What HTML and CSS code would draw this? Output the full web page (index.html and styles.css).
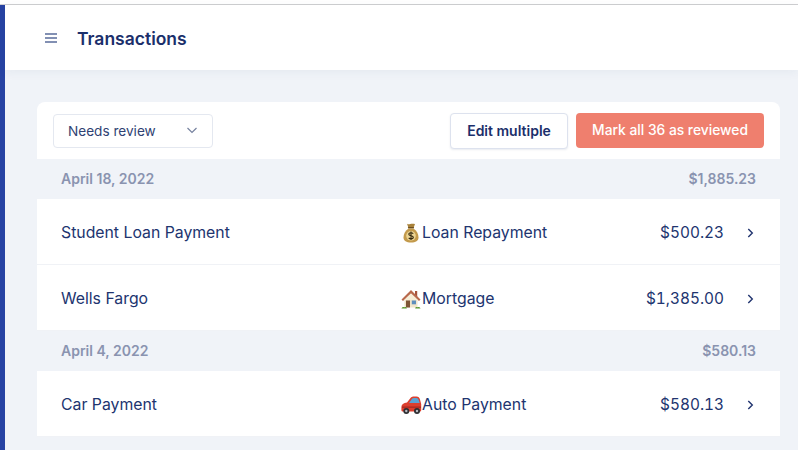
FILE: index.html
```html
<!DOCTYPE html>
<html lang="en">
<head>
<meta charset="utf-8">
<title>Transactions</title>
<link rel="stylesheet" href="styles.css">
</head>
<body>
<div class="topline"></div>
<div class="app">
  <div class="rail"></div>
  <div class="main">
    <header class="header">
      <svg class="menu" width="12" height="10" viewBox="0 0 12 10"><path d="M0 1h12M0 5h12M0 9h12" stroke="#5a6c9b" stroke-width="1.5" fill="none"/></svg>
      <h1 class="title">Transactions</h1>
    </header>
    <section class="content">
      <div class="card">
        <div class="toolbar">
          <div class="select">
            <span>Needs review</span>
            <svg width="12" height="7" viewBox="0 0 12 7"><path d="M1.500 1l4.500 4.500L10.500 1" stroke="#76829f" stroke-width="1.200" fill="none"/></svg>
          </div>
          <div class="actions">
            <button class="btn btn-light">Edit multiple</button>
            <button class="btn btn-primary">Mark all 36 as reviewed</button>
          </div>
        </div>
        <div class="group"><span>April 18, 2022</span><span>$1,885.23</span></div>
        <div class="row">
          <span class="name">Student Loan Payment</span>
          <span class="cat">
            <svg class="emoji" width="20" height="20" viewBox="0 0 20 20">
              <path d="M6 .8c1.200.7 2 .7 3.200.3 1.400-.5 3-.6 4.800-.1L12.500 5h-5z" fill="#a9823a"/>
              <rect x="6.900" y="4" width="6.200" height="1.600" rx=".8" fill="#6b4e20"/>
              <path d="M7.500 5.500C4.500 7.500 2.500 10.800 2.500 14.500c0 3.500 2.800 5 7.500 5s7.500-1.500 7.500-5c0-3.700-2-7-5-9z" fill="#c39a4c"/>
              <circle cx="10" cy="12.800" r="4.800" fill="#ecd594"/>
              <path d="M12.200 10.700c-.5-.7-1.300-1-2.200-1-1.200 0-2.200.6-2.200 1.500 0 2.100 4.500 1 4.500 3.100 0 .9-1 1.500-2.300 1.500-1 0-1.800-.4-2.300-1M10 8.500v8.600" stroke="#33270f" stroke-width="1.100" fill="none"/>
            </svg>Loan Repayment</span>
          <span class="amount">$500.23</span>
          <svg class="chev" width="7" height="10" viewBox="0 0 7 10"><path d="M1.300 1l4 4-4 4" stroke="#21346f" stroke-width="1.400" fill="none"/></svg>
        </div>
        <div class="row">
          <span class="name">Wells Fargo</span>
          <span class="cat">
            <svg class="emoji" width="20" height="20" viewBox="0 0 20 20">
              <rect x="14" y="2" width="2.200" height="6" fill="#a5543c"/>
              <rect x="3.500" y="9" width="13" height="9.500" fill="#f1e6cb"/>
              <path d="M10 1L.5 10.500 2 12l8-7.500 8 7.500 1.500-1.500z" fill="#b8694c"/>
              <path d="M10 4.500L3.200 11h13.600z" fill="#f6edd6"/>
              <rect x="5" y="11.500" width="4" height="7" fill="#7e5536"/>
              <rect x="10.800" y="11.500" width="4.200" height="3.800" fill="#5f8fbd"/>
              <path d="M.5 19.500c.3-1.600 2-2 3-1.200 1-.5 2.200 0 2.300 1.200zM14.200 19.500c.1-1.200 1.300-1.700 2.300-1.200 1-.8 2.700-.4 3 1.200z" fill="#5f9a35"/>
            </svg>Mortgage</span>
          <span class="amount">$1,385.00</span>
          <svg class="chev" width="7" height="10" viewBox="0 0 7 10"><path d="M1.300 1l4 4-4 4" stroke="#21346f" stroke-width="1.400" fill="none"/></svg>
        </div>
        <div class="group"><span>April 4, 2022</span><span>$580.13</span></div>
        <div class="row">
          <span class="name">Car Payment</span>
          <span class="cat">
            <svg class="emoji emoji-car" width="21" height="20" viewBox="0 0 21 20">
              <path d="M6 7.500L9.500 3C10.300 2 11.300 1.500 13 1.500h2.500c1.800 0 3 1.200 3.500 3l1.200 4.500v6c0 1-.5 1.500-1.500 1.500H2C1 16.500.4 16 .4 15v-3C.4 9.500 2.500 8 6 7.500z" fill="#dc3f2e"/>
              <path d="M8 8l3-4.200c.4-.6 1-.9 2-.9h2.500c1 0 1.800.7 2.200 2L18.700 8z" fill="#5ba3d4"/>
              <rect x="1" y="11.500" width="19" height="1.300" fill="#a92a20"/>
              <circle cx="5.300" cy="16" r="3" fill="#2f2f33"/>
              <circle cx="5.300" cy="16" r="1.200" fill="#b9bcc2"/>
              <circle cx="16" cy="16" r="3" fill="#2f2f33"/>
              <circle cx="16" cy="16" r="1.200" fill="#b9bcc2"/>
            </svg>Auto Payment</span>
          <span class="amount">$580.13</span>
          <svg class="chev" width="7" height="10" viewBox="0 0 7 10"><path d="M1.300 1l4 4-4 4" stroke="#21346f" stroke-width="1.400" fill="none"/></svg>
        </div>
        <div class="group group-tail"></div>
      </div>
    </section>
  </div>
</div>
</body>
</html>
```
FILE: styles.css
```css
* { box-sizing: border-box; }
html, body { margin: 0; height: 100%; overflow: hidden; }
body {
  background: #fff;
  font-family: Inter, "Liberation Sans", sans-serif;
  color: #21346f;
  padding-top: 4px;
}
.topline { height: 1px; background: #cfcfd1; }
.app { display: flex; height: 445px; }
.rail { width: 5px; flex: none; background: #2743a3; }
.main { flex: 1; min-width: 0; background: #f0f3f8; }
.header {
  height: 65px;
  background: #fff;
  display: flex;
  align-items: center;
  gap: 20px;
  padding: 2px 0 0 40px;
  box-shadow: 0 2px 10px rgba(40, 60, 110, .06);
}
.menu { flex: none; margin-top: -2px; }
.title { margin: 0; font-size: 17.500px; font-weight: 600; color: #1b2f6b; }
.content { padding: 32px 18px 0 32px; }
.card { background: #fff; border-radius: 8px 8px 0 0; }
.toolbar {
  height: 57px;
  display: flex;
  align-items: center;
  justify-content: space-between;
  padding: 0 16px;
}
.select {
  width: 160px;
  height: 34px;
  display: flex;
  align-items: center;
  justify-content: space-between;
  padding: 0 14px;
  border: 1px solid #e4e8f0;
  border-radius: 4px;
  font-size: 13.600px;
  color: #2f4273;
}
.actions { display: flex; gap: 8px; }
.btn {
  height: 36px;
  border-radius: 4px;
  font-family: inherit;
  font-size: 14px;
  font-weight: 600;
}
.btn-light {
  width: 118px;
  background: #fff;
  color: #1b2f6b;
  border: 1px solid #dde2ee;
  box-shadow: 0 1px 2px rgba(40, 60, 110, .1);
}
.btn-primary {
  width: 188px;
  height: 35px;
  background: #ef7f6e;
  color: #fff;
  border: 0;
  font-size: 13.800px;
  font-weight: 500;
}
.group {
  height: 40px;
  background: #f0f3f8;
  display: flex;
  align-items: center;
  justify-content: space-between;
  padding: 0 24px 2px;
  font-size: 14px;
  font-weight: 600;
  color: #8a93b0;
}
.group-tail { height: 14px; }
.row {
  height: 66px;
  display: flex;
  align-items: center;
  padding: 2px 26px 0 24px;
  font-size: 15.800px;
  color: #21346f;
  border-bottom: 1px solid #f0f2f6;
}
.name { width: 340px; flex: none; }
.cat { display: flex; align-items: center; }
.emoji { flex: none; margin-right: 1px; }
.emoji-car { margin-right: 0; margin-left: 0; }
.amount { margin-left: auto; font-size: 15.400px; font-variant-numeric: tabular-nums; }
.chev { flex: none; margin-left: 23px; }
```
